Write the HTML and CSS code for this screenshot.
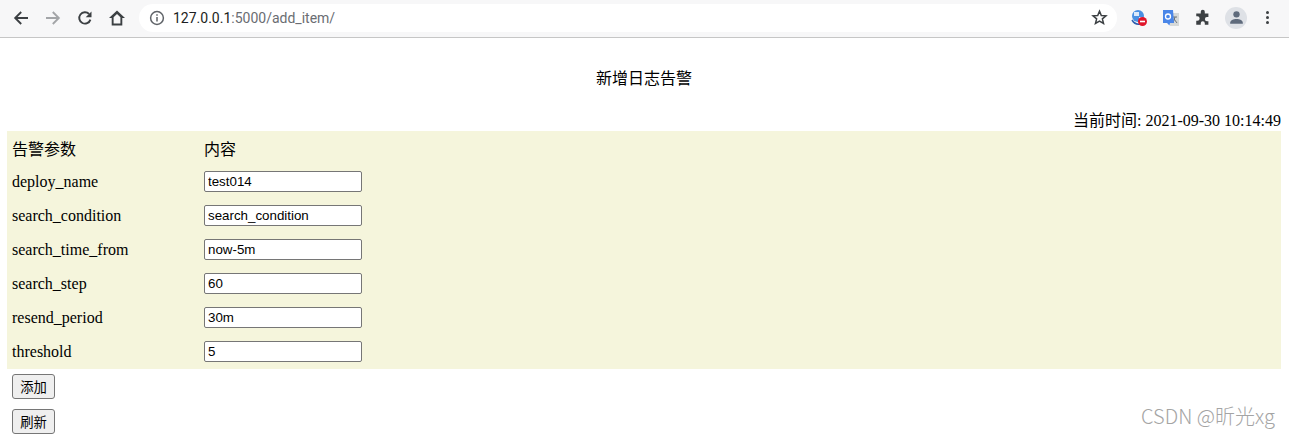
FILE: index.html
```html
<!DOCTYPE html>
<html lang="zh">
<head>
<meta charset="utf-8">
<title>新增日志告警</title>
<link rel="stylesheet" href="styles.css">
</head>
<body>
<header class="toolbar">
  <div class="nav">
    <svg class="icon" viewBox="0 0 16 16"><path d="M15 8H2.600M8.200 2 2.200 8l6 6" class="st"/></svg>
    <svg class="icon dim" viewBox="0 0 16 16"><path d="M1 8h12.400M7.800 2l6 6-6 6" class="st"/></svg>
    <svg class="icon" viewBox="0 0 16 16"><path d="M13.400 9.600A5.700 5.700 0 1 1 12.100 4" class="st"/><path d="M14.500 1.400v5.800H8.700z" class="fl"/></svg>
    <svg class="icon" viewBox="0 0 16 16"><path d="M8 .5 0 8h2.700v7.500h10.600V8H16zM4.600 13.600V7.200L8 4l3.400 3.200v6.400z" class="fl"/></svg>
  </div>
  <div class="omnibox">
    <svg class="info" viewBox="0 0 16 16"><circle cx="8" cy="8" r="6.400" class="thin"/><path d="M8 7v4.500M8 4.200v1.600" class="thin"/></svg>
    <span class="url"><b>127.0.0.1</b>:5000/add_item/</span>
    <svg class="star" viewBox="0 0 16 16"><path d="m8 2 1.700 4.100 4.400.3-3.400 2.900 1.100 4.300L8 11.300l-3.800 2.300 1.100-4.300-3.400-2.900 4.400-.3z" class="thin"/></svg>
  </div>
  <div class="exts">
    <svg class="ext" viewBox="0 0 18 18"><circle cx="8" cy="7" r="6" fill="#4a90e2"/><path d="M4 3h5v4H4zM9 8h4v3H9z" fill="#dbe9fb"/><path d="M2 11q3 5 8 4" stroke="#2d5fb0" stroke-width="1.500" fill="none"/><circle cx="12.500" cy="12.500" r="4.500" fill="#e0162b"/><path d="M10 12.500h5" stroke="#fff" stroke-width="1.600"/></svg>
    <svg class="ext" viewBox="0 0 18 18"><path d="M8 4h9v13H8z" fill="#d5d8d8"/><path d="M11 8h4M13 8l-2 6M12 10l3 4" stroke="#6b7378" fill="none"/><path d="M1 1h10l1 13H8l-.5 2.500L5 14H1z" fill="#4a86e8"/><circle cx="6" cy="7.500" r="2.500" fill="none" stroke="#fff" stroke-width="1.300"/></svg>
    <svg class="ext" viewBox="0 0 16 16"><path d="M6 2.500a1.800 1.800 0 0 1 3.600 0V4h3.200v3.200h-1.300a1.800 1.800 0 0 0 0 3.600h1.300V14H9.600v-1.300a1.800 1.800 0 0 0-3.600 0V14H2v-3.500h1a2 2 0 0 0 0-4H2V4h4z" fill="#3c4043"/></svg>
    <span class="avatar"><svg viewBox="0 0 24 24" class="person"><circle cx="12" cy="8" r="4" fill="#5f6b7c"/><path d="M4 19c0-3.500 4-5 8-5s8 1.500 8 5v1H4z" fill="#5f6b7c"/></svg></span>
    <span class="menu"><i></i><i></i><i></i></span>
  </div>
</header>

<main class="page">
  <h1 class="title">新增日志告警</h1>
  <p class="clock">当前时间: 2021-09-30 10:14:49</p>
  <form class="panel">
    <div class="row head"><span>告警参数</span><span>内容</span></div>
    <div class="row"><span>deploy_name</span><input class="field" value="test014"></div>
    <div class="row"><span>search_condition</span><input class="field" value="search_condition"></div>
    <div class="row"><span>search_time_from</span><input class="field" value="now-5m"></div>
    <div class="row"><span>search_step</span><input class="field" value="60"></div>
    <div class="row"><span>resend_period</span><input class="field" value="30m"></div>
    <div class="row"><span>threshold</span><input class="field" value="5"></div>
  </form>
  <div class="actions">
    <button class="btn" type="button">添加</button>
    <button class="btn" type="button">刷新</button>
  </div>
</main>
<div class="watermark">CSDN @昕光xg</div>
</body>
</html>
```

FILE: styles.css
```css
* { box-sizing: border-box; }
html, body { margin: 0; height: 100%; overflow: hidden; }
body {
  background: #fff;
  color: #000;
  font-family: "Liberation Serif", "Noto Sans CJK SC", serif;
  font-size: 16px;
  position: relative;
}
.toolbar {
  height: 38px;
  background: #f7f7f8;
  border-bottom: 1px solid #c6c6c6;
  display: flex;
  align-items: center;
  padding-bottom: 2px;
}
.nav { display: flex; gap: 16px; padding-left: 13px; width: 139px; }
.icon { width: 16px; height: 16px; display: block; }
.st { fill: none; stroke: #3c4043; stroke-width: 1.9; }
.fl { fill: #3c4043; fill-rule: evenodd; }
.dim .st { stroke: #a3a5a8; }
.omnibox {
  width: 978px;
  height: 28px;
  border-radius: 14px;
  background: #fff;
  display: flex;
  align-items: center;
  padding: 0 9px 0 10px;
}
.info { width: 16px; height: 16px; flex: none; }
.thin { fill: none; stroke: #5f6368; stroke-width: 1.500; }
.url {
  margin-left: 8px;
  flex: 1;
  font: 14px "Roboto", "Liberation Sans", sans-serif;
  color: #6a6d72;
}
.url b { font-weight: 400; color: #1c1e21; }
.star { width: 17px; height: 17px; flex: none; }
.star .thin { stroke: #3c4043; stroke-width: 1.400; }
.exts { display: flex; align-items: center; flex: 1; padding-left: 13px; }
.ext { width: 18px; height: 18px; flex: none; margin-right: 14px; }
.avatar {
  width: 22px; height: 22px; border-radius: 50%;
  background: #dee1e6;
  display: flex; align-items: center; justify-content: center;
  margin-left: -1px;
}
.person { width: 19px; height: 19px; }
.menu { display: flex; flex-direction: column; gap: 2px; margin-left: 19px; }
.menu i { width: 3px; height: 3px; border-radius: 50%; background: #3c4043; display: block; }

.page { padding: 0 8px 0 7px; }
.title {
  margin: 0;
  padding-top: 28px;
  height: 69px;
  line-height: 22px;
  font-size: 16px;
  font-weight: 400;
  text-align: center;
  font-family: "Noto Sans CJK SC", sans-serif;
}
.clock {
  margin: 0;
  height: 24px;
  line-height: 27px;
  text-align: right;
}
.panel { background: #f5f5dc; display: block; }
.row {
  height: 34px;
  display: grid;
  grid-template-columns: 192px 158px;
  align-items: center;
  padding-left: 5px;
}
.head span { font-family: "Noto Sans CJK SC", sans-serif; }
.field {
  width: 158px;
  height: 21px;
  padding: 1px 3px;
  margin: 0 0 1px;
  border: 1px solid #767676;
  border-radius: 2px;
  background: #fff;
  font: 13.33px "Liberation Sans", sans-serif;
  color: #000;
}
.actions { display: flex; flex-direction: column; align-items: flex-start; gap: 10px; padding: 5px 0 0 5px; }
.btn {
  width: 43px;
  height: 25px;
  padding: 0;
  border: 1px solid #767676;
  border-radius: 3px;
  background: #efefef;
  color: #000;
  font: 13.33px "Noto Sans CJK SC", sans-serif;
}
.watermark {
  position: absolute;
  right: 14px;
  top: 403px;
  font: 300 20px "Noto Sans CJK SC", "Open Sans", sans-serif;
  color: #a4a4a4;
  line-height: 26px;
}
```
